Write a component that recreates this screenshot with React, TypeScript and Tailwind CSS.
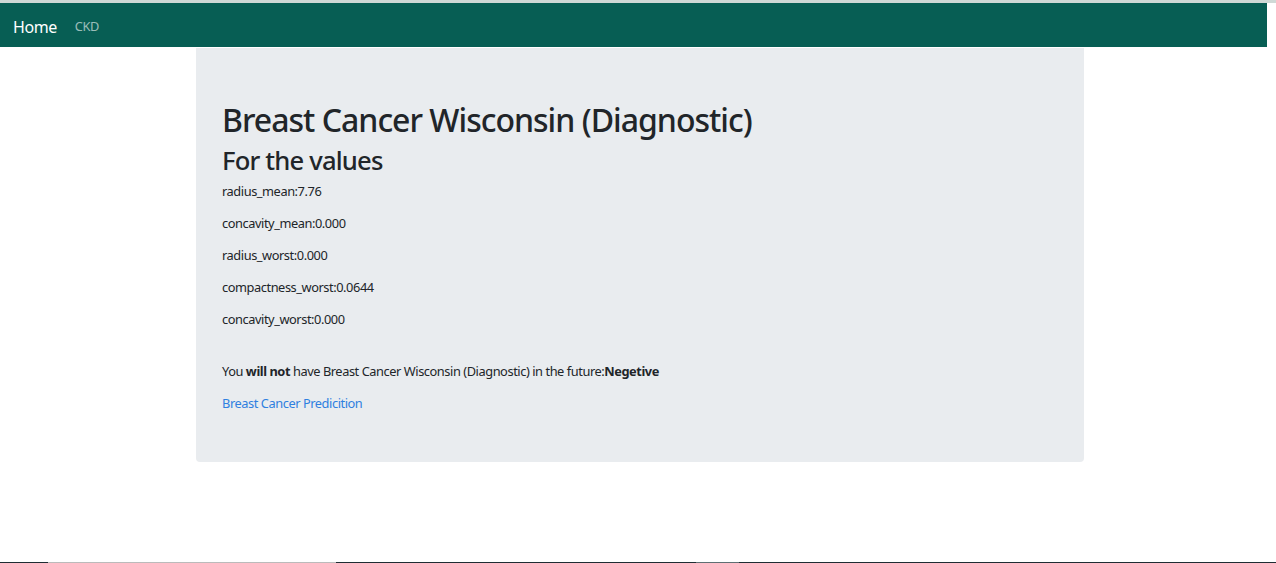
import React from "react";

export default function App() {
  const font = { fontFamily: '"Noto Sans", "Open Sans", Arial, sans-serif' };
  return (
    <div className="relative w-[1276px] h-[563px] bg-white overflow-hidden text-[#212529] tracking-[-0.027em]" style={font}>
      <div className="h-[3px] bg-[#cfd9d6]" />
      <nav className="h-[44px] w-[1267px] bg-[#075e54] flex items-center px-[13px] pt-[3px]">
        <span className="text-[16px] text-white mr-[18px] leading-none">Home</span>
        <span className="text-[12.8px] text-white/60 leading-none">CKD</span>
      </nav>
      <div className="ml-[196px] mt-[1px] w-[888px] h-[414px] bg-[#e9ecef] rounded-b-[4px] px-[26px] pt-[53px]">
        <h1 className="text-[32px] leading-[38.4px] font-medium mb-[6.4px] tracking-[-0.031em]">Breast Cancer Wisconsin (Diagnostic)</h1>
        <h2 className="text-[25.6px] leading-[30.7px] font-medium mb-[5.4px] tracking-[-0.032em]">For the values</h2>
        <div className="text-[12.8px] leading-[19.2px]">
          <p className="mb-[12.8px]">radius_mean:7.76</p>
          <p className="mb-[12.8px]">concavity_mean:0.000</p>
          <p className="mb-[12.8px]">radius_worst:0.000</p>
          <p className="mb-[12.8px]">compactness_worst:0.0644</p>
          <p className="mb-[12.8px]">concavity_worst:0.000</p>
          <br />
          <p className="mb-[12.8px] mt-[1px]">
            You <b>will not</b> have Breast Cancer Wisconsin (Diagnostic) in the future:<b>Negetive</b>
          </p>
          <p>
            <a className="text-[#2f80e0]">Breast Cancer Predicition</a>
          </p>
        </div>
      </div>
      <div className="absolute left-0 bottom-0 w-full h-[1px] bg-[#1f2d33]">
        <div className="absolute left-[48px] w-[288px] h-[1px] bg-[#bbbbbb]" />
        <div className="absolute left-[696px] w-[43px] h-[1px] bg-[#5f6f73]" />
      </div>
    </div>
  );
}
